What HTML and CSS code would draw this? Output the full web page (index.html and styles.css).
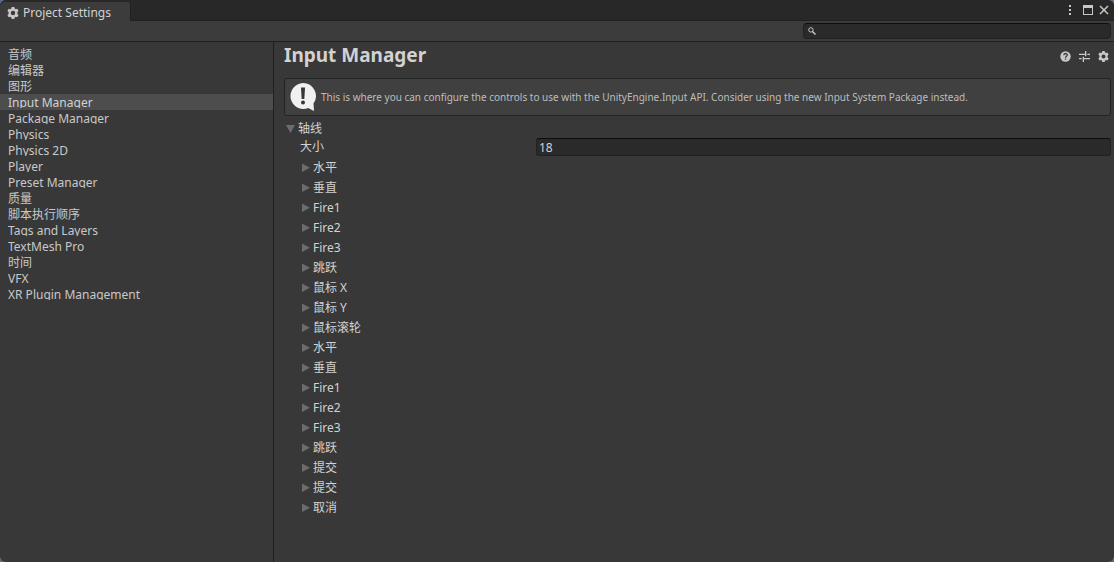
FILE: index.html
```html
<!DOCTYPE html>
<html lang="zh-CN">
<head>
<meta charset="utf-8">
<title>Project Settings</title>
<link rel="stylesheet" href="styles.css">
</head>
<body>
<svg class="defs" aria-hidden="true">
  <symbol id="gear" viewBox="0 0 12 12">
    <path fill-rule="evenodd" d="M4.700 0h2.600l.4 1.600 1 .6 1.600-.5 1.300 2.200-1.200 1.200v1.800l1.200 1.200-1.300 2.200-1.600-.5-1 .6-.4 1.600H4.700l-.4-1.600-1-.6-1.600.5L.4 8.100l1.200-1.200V5.100L.4 3.900l1.300-2.200 1.600.5 1-.6zM6 3.800a2.200 2.200 0 1 0 0 4.400a2.200 2.200 0 0 0 0-4.400z"/>
  </symbol>
  <symbol id="down" viewBox="0 0 10 10"><path d="M0 1h9L4.500 9z"/></symbol>
  <symbol id="right" viewBox="0 0 10 10"><path d="M2 0.500v8.500L10 4.750z"/></symbol>
</svg>
<div class="window">
  <header class="tabbar">
    <button class="tab" type="button"><svg class="icon-gear"><use href="#gear"/></svg>Project Settings</button>
    <div class="window-controls">
      <button type="button" aria-label="Menu"><svg width="4" height="12" viewBox="0 0 4 12"><path d="M1 1h2v2H1zM1 5h2v2H1zM1 9h2v2H1z"/></svg></button>
      <button type="button" aria-label="Maximize"><svg width="10" height="10" viewBox="0 0 10 10"><path fill-rule="evenodd" d="M0 0h10v10H0zM1 3v6h8V3z"/></svg></button>
      <button type="button" aria-label="Close"><svg width="10" height="10" viewBox="0 0 10 10"><path class="stroke-bold" d="M1 1l8 8M9 1l-8 8"/></svg></button>
    </div>
  </header>
  <div class="toolbar">
    <label class="search">
      <svg width="8" height="8" viewBox="0 0 8 8"><circle class="stroke" cx="2.900" cy="2.900" r="2.200"/><path class="stroke-bold" d="M4.500 4.500l3 3"/></svg>
      <input type="text" aria-label="Search">
    </label>
  </div>
  <div class="body">
    <nav class="sidebar">
      <a href="#"><span>音频</span></a>
      <a href="#"><span>编辑器</span></a>
      <a href="#"><span>图形</span></a>
      <a href="#" class="selected" aria-current="page"><span>Input Manager</span></a>
      <a href="#"><span>Package Manager</span></a>
      <a href="#"><span>Physics</span></a>
      <a href="#"><span>Physics 2D</span></a>
      <a href="#"><span>Player</span></a>
      <a href="#"><span>Preset Manager</span></a>
      <a href="#"><span>质量</span></a>
      <a href="#"><span>脚本执行顺序</span></a>
      <a href="#"><span>Tags and Layers</span></a>
      <a href="#"><span>TextMesh Pro</span></a>
      <a href="#"><span>时间</span></a>
      <a href="#"><span>VFX</span></a>
      <a href="#"><span>XR Plugin Management</span></a>
    </nav>
    <main class="panel">
      <div class="panel-head">
        <h1>Input Manager</h1>
        <div class="panel-actions">
          <button type="button" aria-label="Help"><svg width="11" height="11" viewBox="0 0 11 11"><circle cx="5.500" cy="5.500" r="5.200"/><path class="stroke-dark" d="M3.800 4.300C3.800 1.900 7.300 2 7.300 4.100C7.300 5.300 5.500 5.200 5.500 6.700M5.500 7.500v1.300"/></svg></button>
          <button type="button" aria-label="Presets"><svg width="11" height="11" viewBox="0 0 11 11"><path d="M0 2.700h6V0h1.300v5.300H6V4H0zM8.300 2.700H11V4H8.300zM0 7h2.700v1.300H0zM3.700 5.700H5V7h6v1.300H5V11H3.700z"/></svg></button>
          <button type="button" aria-label="Settings"><svg width="11" height="11"><use href="#gear"/></svg></button>
        </div>
      </div>
      <div class="helpbox">
        <svg width="28" height="30" viewBox="0 0 28 30"><path class="bubble" d="M13 1a13 13 0 1 0 5.200 25.100L24 29l-.5-7.500A13 13 0 0 0 13 1z"/><path class="mark" d="M11 5.500h4l-.7 11.500h-2.600z"/><circle class="mark" cx="13" cy="20.500" r="2"/></svg>
        <p>This is where you can configure the controls to use with the UnityEngine.Input API. Consider using the new Input System Package instead.</p>
      </div>
      <button class="fold root" type="button" aria-expanded="true"><svg><use href="#down"/></svg>轴线</button>
      <div class="field">
        <label for="size">大小</label>
        <input id="size" type="text" value="18">
      </div>
      <div class="axes">
        <button class="fold" type="button"><svg><use href="#right"/></svg>水平</button>
        <button class="fold" type="button"><svg><use href="#right"/></svg>垂直</button>
        <button class="fold" type="button"><svg><use href="#right"/></svg>Fire1</button>
        <button class="fold" type="button"><svg><use href="#right"/></svg>Fire2</button>
        <button class="fold" type="button"><svg><use href="#right"/></svg>Fire3</button>
        <button class="fold" type="button"><svg><use href="#right"/></svg>跳跃</button>
        <button class="fold" type="button"><svg><use href="#right"/></svg>鼠标 X</button>
        <button class="fold" type="button"><svg><use href="#right"/></svg>鼠标 Y</button>
        <button class="fold" type="button"><svg><use href="#right"/></svg>鼠标滚轮</button>
        <button class="fold" type="button"><svg><use href="#right"/></svg>水平</button>
        <button class="fold" type="button"><svg><use href="#right"/></svg>垂直</button>
        <button class="fold" type="button"><svg><use href="#right"/></svg>Fire1</button>
        <button class="fold" type="button"><svg><use href="#right"/></svg>Fire2</button>
        <button class="fold" type="button"><svg><use href="#right"/></svg>Fire3</button>
        <button class="fold" type="button"><svg><use href="#right"/></svg>跳跃</button>
        <button class="fold" type="button"><svg><use href="#right"/></svg>提交</button>
        <button class="fold" type="button"><svg><use href="#right"/></svg>提交</button>
        <button class="fold" type="button"><svg><use href="#right"/></svg>取消</button>
      </div>
    </main>
  </div>
</div>
</body>
</html>
```
FILE: styles.css
```css
* { box-sizing: border-box; }
html { background: #5d6a8a; }
body {
  margin: 0;
  color: #d2d2d2;
  font: 12px/16px "Noto Sans", "Noto Sans CJK SC", sans-serif;
}
button, input { font: inherit; color: inherit; }
button { margin: 0; padding: 0; border: 0; background: none; }
input { min-width: 0; outline: 0; }
svg { display: block; flex: none; fill: #c8c8c8; }
.defs { display: none; }
.stroke { fill: none; stroke: #c8c8c8; stroke-width: 1; }
.stroke-bold { fill: none; stroke: #c8c8c8; stroke-width: 1.5; }
.stroke-dark { fill: none; stroke: #383838; stroke-width: 1.3; }

.window {
  display: flex;
  flex-direction: column;
  min-height: 100vh;
  overflow: hidden;
  background: #383838;
  border-radius: 6px;
}

.tabbar {
  display: flex;
  justify-content: space-between;
  height: 21px;
  padding-top: 2px;
  background: linear-gradient(#282828 0 20px, #202020 20px);
}
.tab {
  display: flex;
  align-items: center;
  gap: 4px;
  padding: 2px 19px 0 7px;
  background: #3c3c3c;
  border-right: 1px solid #202020;
  border-radius: 5px 3px 0 0;
}
.icon-gear { width: 12px; height: 12px; }
.window-controls {
  display: flex;
  align-items: center;
  gap: 6px;
  padding: 0 5px 3px 0;
}
.window-controls button:first-child { margin-right: 5px; }

.toolbar {
  display: flex;
  justify-content: flex-end;
  height: 21px;
  padding: 2px 3px;
  background: #3c3c3c;
  border-bottom: 1px solid #202020;
}
.search {
  display: flex;
  align-items: center;
  gap: 4px;
  width: 308px;
  padding: 0 4px;
  background: #2a2a2a;
  border: 1px solid #212121;
  border-top-color: #0d0d0d;
  border-radius: 4px;
}
.search input { flex: 1; height: 14px; padding: 0; background: none; border: 0; }

.body { display: flex; flex: 1; }
.sidebar {
  flex: none;
  width: 274px;
  padding-top: 4px;
  border-right: 1px solid #202020;
}
.sidebar a {
  display: block;
  height: 16px;
  padding-left: 8px;
  color: #c8c8c8;
  text-decoration: none;
}
.sidebar span { display: block; height: 14px; overflow: hidden; line-height: 17px; }
.sidebar .selected { background: #4d4d4d; color: #d2d2d2; }

.panel { flex: 1; min-width: 0; padding: 0 3px 0 10px; }
.panel-head { display: flex; justify-content: space-between; height: 36px; }
h1 { margin: 0; font-size: 19px; line-height: 26px; }
.panel-actions {
  display: flex;
  align-items: center;
  gap: 8px;
  height: 28px;
  padding-right: 2px;
}
.helpbox {
  display: flex;
  align-items: center;
  gap: 4px;
  min-height: 38px;
  padding: 2px 4px 2px 5px;
  background: #404040;
  border: 1px solid #232323;
  border-radius: 3px;
}
.helpbox svg { margin-right: -1px; }
.helpbox p { margin: 0; color: #bdbdbd; font-size: 10px; }
.bubble { fill: #f0f0f0; }
.mark { fill: #353535; }

.fold { display: flex; align-items: center; gap: 3px; height: 20px; line-height: 20px; }
.fold svg { width: 10px; height: 10px; fill: #6c6c6c; }
.root { gap: 2px; height: 22px; padding: 3px 0 0 2px; }
.field { display: flex; align-items: center; padding-left: 16px; height: 18px; }
.field label { width: 236px; }
.field input {
  flex: 1;
  height: 18px;
  padding: 0 2px;
  background: #2a2a2a;
  border: 1px solid #212121;
  border-top-color: #0d0d0d;
  border-radius: 3px;
}
.axes { padding: 2px 0 4px 16px; }
```
